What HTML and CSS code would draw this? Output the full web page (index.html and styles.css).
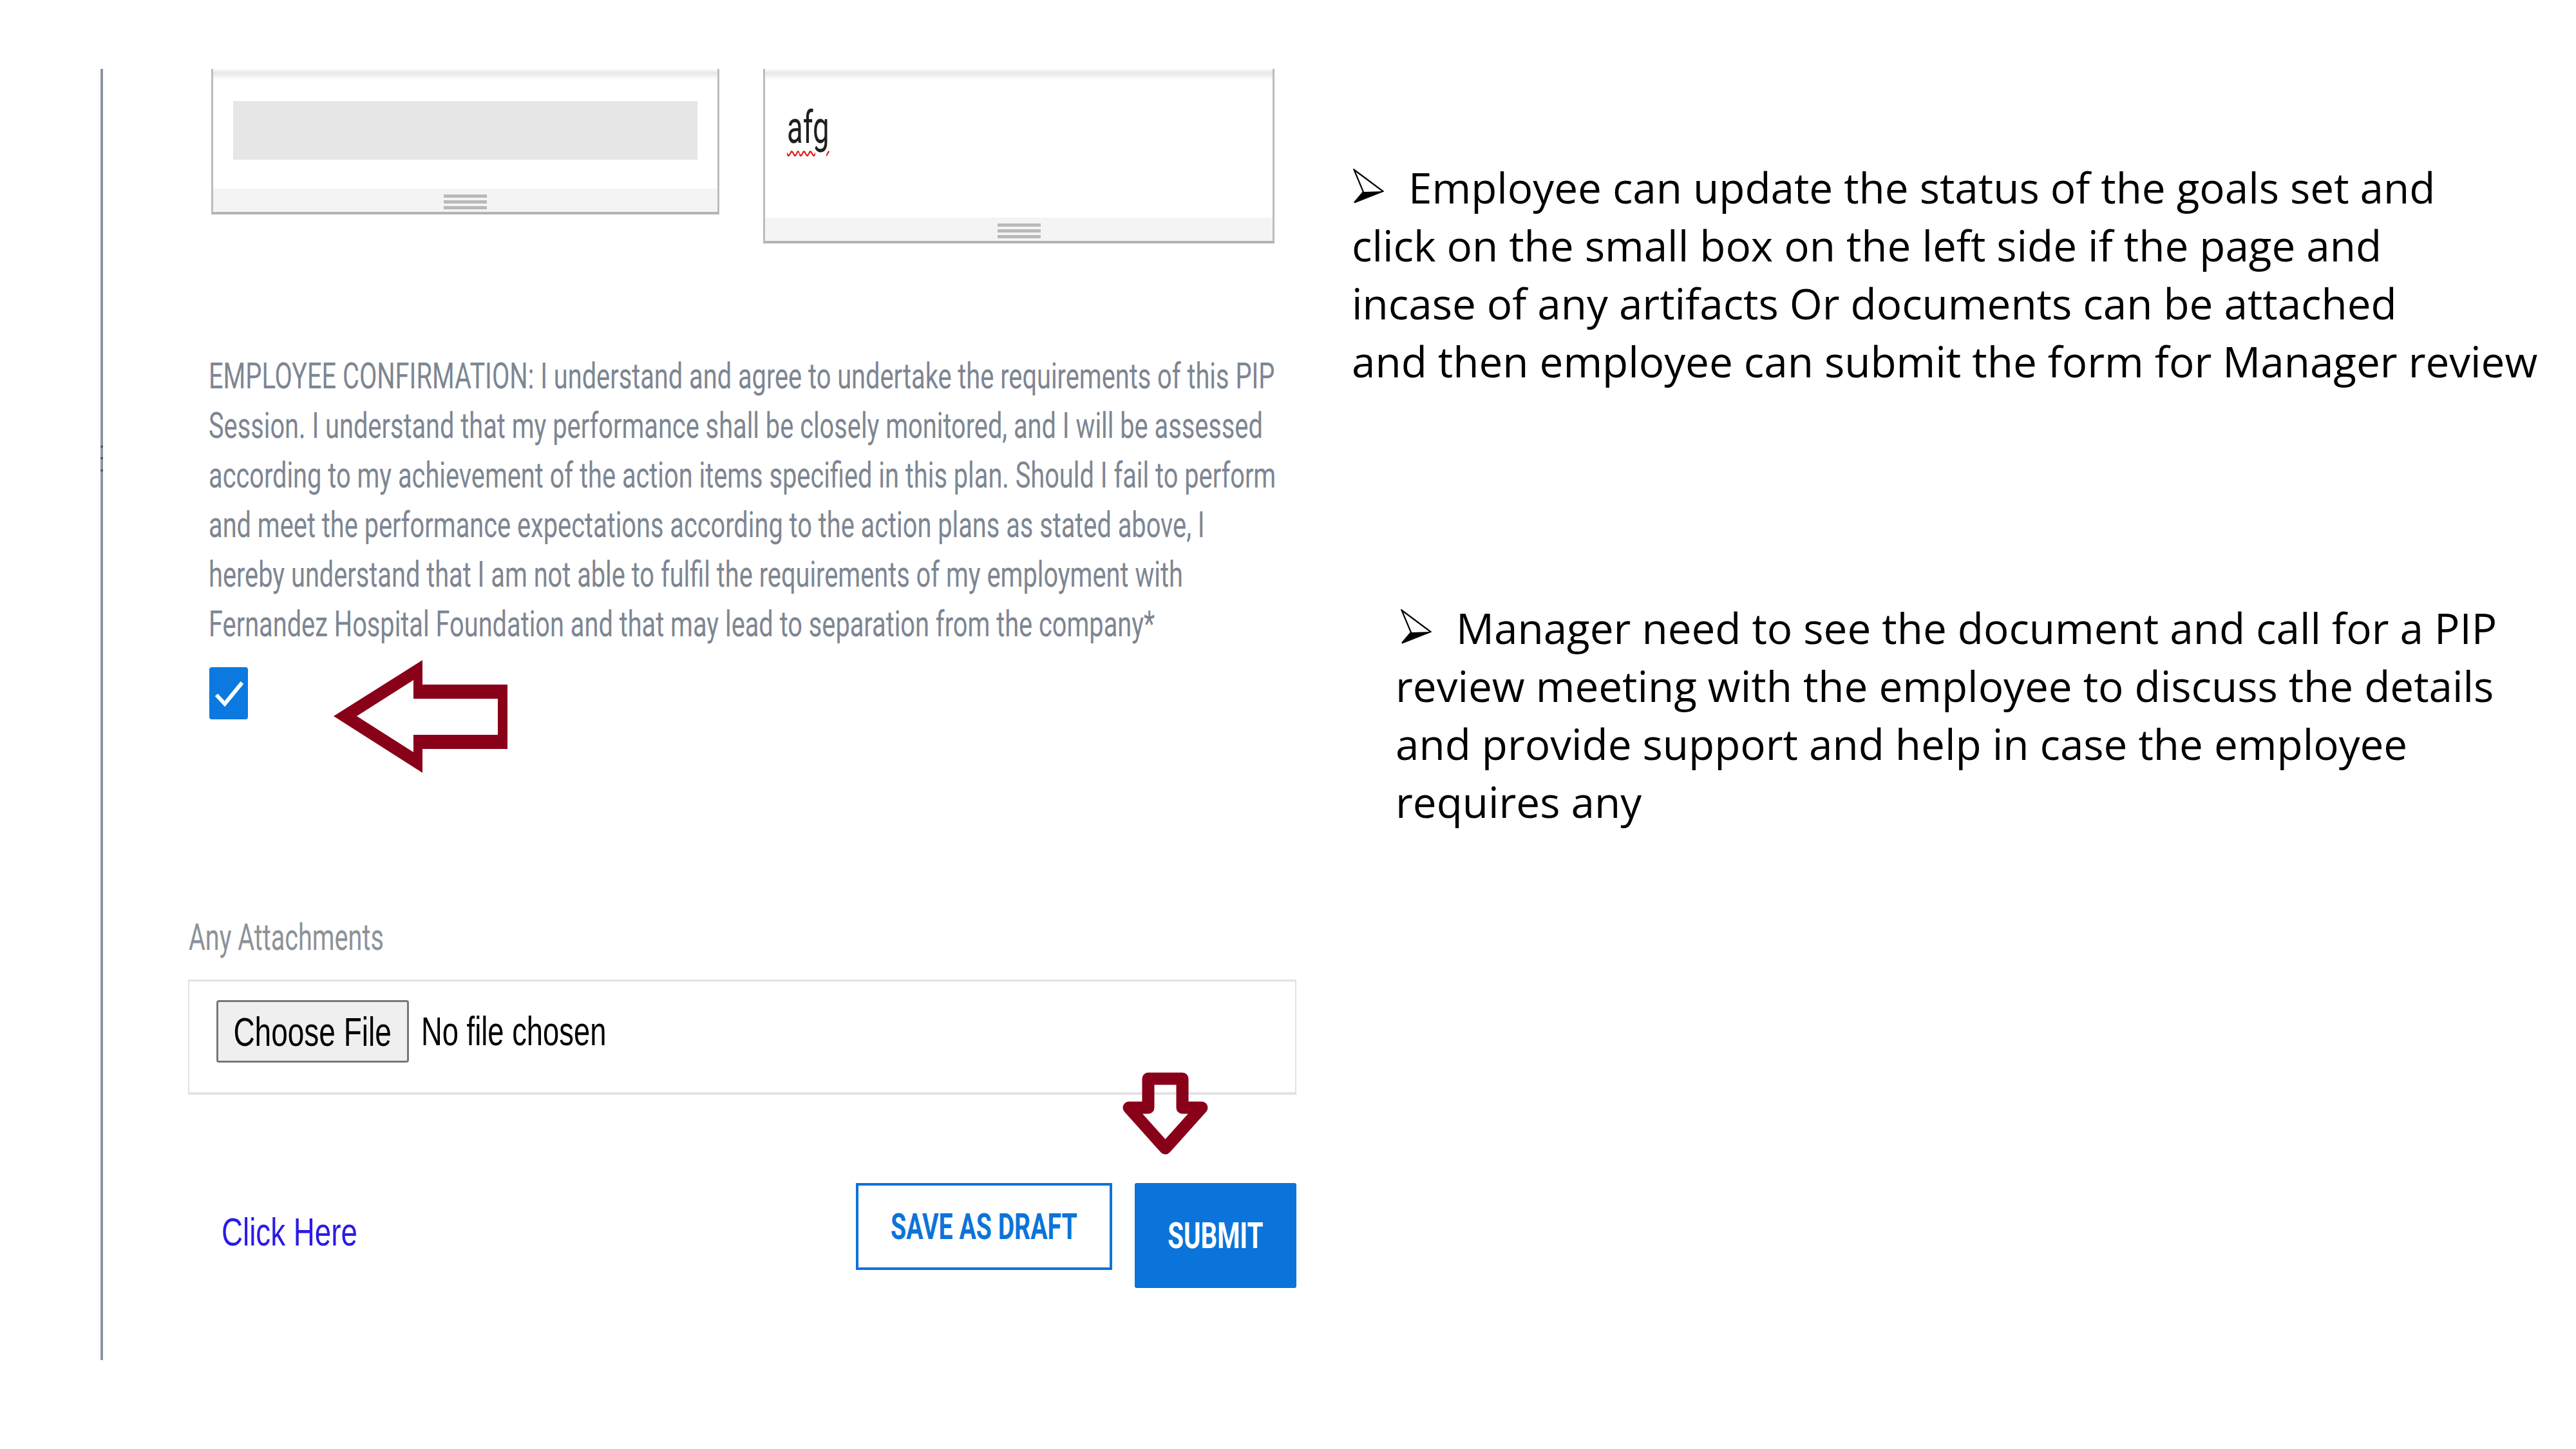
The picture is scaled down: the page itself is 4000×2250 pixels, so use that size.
FILE: index.html
```html
<!DOCTYPE html>
<html lang="en">
<head>
<meta charset="utf-8">
<title>PIP Employee Confirmation</title>
<link rel="stylesheet" href="styles.css">
</head>
<body>
<div class="page">
  <div class="divider">
    <span class="tick t1"></span><span class="tick t2"></span><span class="tick t3"></span>
  </div>

  <div class="form">
    <div class="boxes">
      <div class="ta ta-left">
        <div class="ta-shade"></div>
        <div class="ta-body"><div class="ta-fill"></div></div>
        <div class="ta-foot"><i></i><i></i><i></i></div>
      </div>
      <div class="ta ta-right">
        <div class="ta-shade"></div>
        <div class="ta-body"><span class="typed">afg</span></div>
        <div class="ta-foot"><i></i><i></i><i></i></div>
      </div>
    </div>

    <div class="confirm">EMPLOYEE CONFIRMATION: I understand and agree to undertake the requirements of this PIP<br>Session. I understand that my performance shall be closely monitored, and I will be assessed<br>according to my achievement of the action items specified in this plan. Should I fail to perform<br>and meet the performance expectations according to the action plans as stated above, I<br>hereby understand that I am not able to fulfil the requirements of my employment with<br>Fernandez Hospital Foundation and that may lead to separation from the company*</div>

    <div class="check-row">
      <svg class="checkbox" viewBox="0 0 60 81" width="60" height="81"><rect width="60" height="81" rx="4" fill="#0b79e0"/><path d="M11 43 L24 57 L51 24" fill="none" stroke="#fff" stroke-width="6"/></svg>
      <svg class="left-arrow" viewBox="0 0 270 175" width="270" height="175"><path fill-rule="evenodd" fill="#890019" d="M0 87 L138 0 L138 38 L270 38 L270 138 L138 138 L138 175 Z M36 87 L124 31 L124 60 L255 60 L255 116 L124 116 L124 143 Z"/></svg>
    </div>

    <div class="attach-label">Any Attachments</div>

    <div class="filebox">
      <div class="choose"><span>Choose File</span></div>
      <div class="nofile"><span>No file chosen</span></div>
    </div>

    <svg class="down-arrow" viewBox="0 0 133 128" width="133" height="128"><path d="M40 10 L93 10 L93 55 L123 55 L66.5 118 L10 55 L40 55 Z" fill="none" stroke="#890019" stroke-width="19" stroke-linejoin="round"/></svg>

    <div class="actions">
      <a class="click" href="#">Click Here</a>
      <div class="btns">
        <div class="btn btn-draft"><span>SAVE AS DRAFT</span></div>
        <div class="btn btn-submit"><span>SUBMIT</span></div>
      </div>
    </div>
  </div>

  <div class="notes">
    <div class="note note-1"><svg class="bullet" viewBox="0 0 48 54" width="48" height="54"><path d="M1.5 1.5 L46.5 35 L2 52.5 L16 36 Z" fill="#fff" stroke="#000" stroke-width="2.2"/><path d="M16 36 L46.5 35 L2 52.5 Z" fill="#000"/></svg>Employee can update the status of the goals set and<br>click on the small box on the left side if the page and<br>incase of any artifacts Or documents can be attached<br>and then employee can submit the form for Manager review</div>
    <div class="note note-2"><svg class="bullet" viewBox="0 0 48 54" width="48" height="54"><path d="M1.5 1.5 L46.5 35 L2 52.5 L16 36 Z" fill="#fff" stroke="#000" stroke-width="2.2"/><path d="M16 36 L46.5 35 L2 52.5 Z" fill="#000"/></svg>Manager need to see the document and call for a PIP<br>review meeting with the employee to discuss the details<br>and provide support and help in case the employee<br>requires any</div>
  </div>
</div>
</body>
</html>
```

FILE: styles.css
```css
* { box-sizing: border-box; }
html, body { margin: 0; padding: 0; background: #fff; }
body {
  width: 4000px;
  height: 2250px;
  overflow: hidden;
  font-family: Roboto, "Liberation Sans", sans-serif;
}
.page { display: flex; height: 2250px; }

.divider {
  position: relative;
  flex: 0 0 4px;
  margin: 107px 0 0 156px;
  height: 2005px;
  background: #8b95a3;
}
.divider .tick { position: absolute; left: 0; width: 4px; height: 3px; background: #4a5567; }
.divider .t1 { top: 585px; }
.divider .t2 { top: 603px; }
.divider .t3 { top: 622px; }

.form { position: relative; flex: 0 0 1860px; width: 1860px; min-width: 0; padding-top: 107px; }

.boxes { display: flex; gap: 68px; margin-left: 168px; align-items: flex-start; }
.ta {
  display: flex;
  flex-direction: column;
  border-left: 3px solid #bcbcbc;
  border-right: 3px solid #bcbcbc;
  border-bottom: 4px solid #b4b4b4;
  background: #fff;
}
.ta-left { width: 789px; height: 226px; }
.ta-right { width: 794px; height: 271px; }
.ta-shade { flex: none; height: 16px; background: linear-gradient(#fdfdfd 0, #e7e7e7 6px, #fbfbfb 16px); }
.ta-body { flex: 1; }
.ta-left .ta-body { padding: 34px 0 0 31px; }
.ta-fill { width: 721px; height: 91px; background: #e6e6e6; }
.ta-right .ta-body { padding: 40px 0 0 34px; }
.typed {
  display: inline-block;
  font-size: 70px;
  line-height: 70px;
  color: #1f1f1f;
  transform: scaleX(0.65);
  transform-origin: 0 0;
  text-decoration: underline wavy #e02020;
  text-decoration-thickness: 3px;
  text-underline-offset: 12px;
}
.ta-foot {
  flex: 0 0 36px;
  background: #f4f4f4;
  display: flex;
  flex-direction: column;
  align-items: center;
  gap: 4px;
  padding-top: 9px;
}
.ta-foot i { display: block; width: 67px; height: 5px; background: #b9b9b9; }

.confirm {
  margin: 168px 0 0 164px;
  font-size: 56px;
  line-height: 77px;
  color: #7d8692;
  white-space: nowrap;
  width: max-content;
  transform: scaleX(0.71);
  transform-origin: 0 0;
}

.check-row { display: flex; align-items: flex-start; gap: 133px; margin: 17px 0 0 165px; }
.checkbox { display: block; margin-top: 11px; }
.left-arrow { display: block; }

.attach-label {
  margin: 226px 0 0 133px;
  font-size: 58px;
  line-height: 58px;
  color: #8c9299;
  width: max-content;
  white-space: nowrap;
  transform: scaleX(0.683);
  transform-origin: 0 0;
}

.filebox {
  margin: 37px 0 0 132px;
  width: 1721px;
  height: 179px;
  border-style: solid;
  border-color: #e3e3e3;
  border-width: 3px 2px 4px;
  display: flex;
  align-items: flex-start;
  padding: 29px 0 0 42px;
  font-family: "Liberation Sans", Arial, sans-serif;
  font-size: 63px;
  color: #000;
}
.choose {
  flex: none;
  width: 299px;
  height: 97px;
  background: #efefef;
  border: 3px solid #777;
  border-radius: 4px;
  display: flex;
  align-items: center;
  justify-content: center;
}
.choose span { display: inline-block; white-space: nowrap; transform: scaleX(0.73); }
.nofile { margin-left: 19px; line-height: 97px; white-space: nowrap; }
.nofile span { display: inline-block; transform: scaleX(0.72); transform-origin: 0 0; }

.down-arrow { position: absolute; left: 1583px; top: 1665px; display: block; }

.actions { display: flex; align-items: flex-start; margin: 137px 0 0 184px; width: 1669px; }
.click {
  display: inline-block;
  margin-top: 46px;
  font-family: "Liberation Sans", Arial, sans-serif;
  font-size: 61px;
  line-height: 61px;
  color: #2a1ae8;
  text-decoration: none;
  white-space: nowrap;
  transform: scaleX(0.75);
  transform-origin: 0 0;
}
.btns { margin-left: auto; display: flex; gap: 35px; align-items: flex-start; }
.btn { display: flex; align-items: center; justify-content: center; font-weight: 700; white-space: nowrap; }
.btn span { display: inline-block; }
.btn-draft { width: 398px; height: 135px; border: 4px solid #0b74d9; background: #fff; color: #0b74d9; font-size: 56px; }
.btn-draft span { transform: scaleX(0.7); }
.btn-submit { width: 251px; height: 163px; background: #0a74da; border-radius: 3px; color: #fff; font-size: 55px; }
.btn-submit span { transform: scaleX(0.73); }

.notes {
  flex: none;
  margin-left: 79px;
  padding-top: 246px;
  font-family: "Open Sans", "Noto Sans", sans-serif;
  font-size: 65.6px;
  line-height: 90px;
  color: #000;
  white-space: nowrap;
}
.bullet { display: inline-block; vertical-align: baseline; margin-right: 38px; }
.note-1 .bullet { margin-left: 2px; }
.note-2 { margin: 324px 0 0 68px; }
.note-2 .bullet { margin-left: 8px; }
```
